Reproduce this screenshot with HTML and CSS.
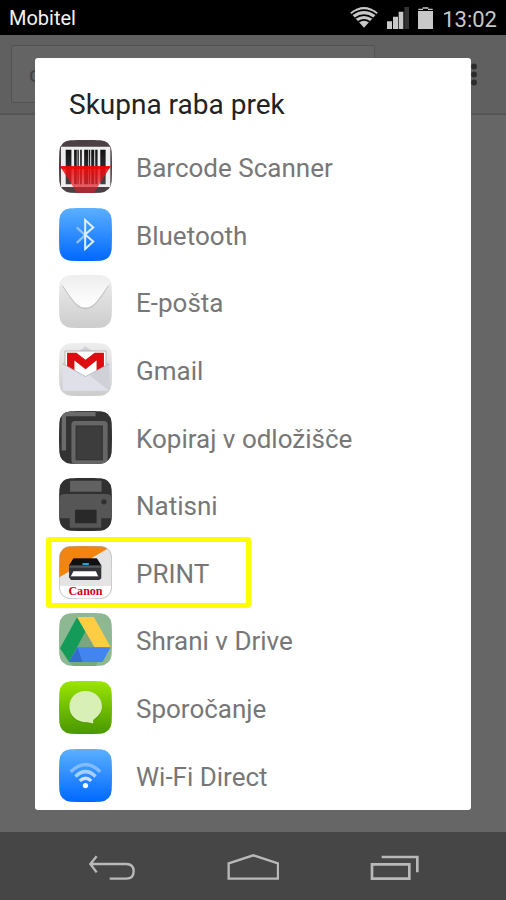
FILE: index.html
```
<!DOCTYPE html>
<html lang="sl">
<head>
  <meta charset="UTF-8" />
  <title>Skupna raba prek</title>
  <meta name="viewport" content="width=device-width, initial-scale=1.0" />
  <link rel="stylesheet" href="styles.css">
</head>
<body>

  <header class="status-bar">
    <span class="carrier">Mobitel</span>
    <svg class="status-wifi" viewBox="0 0 84 64" aria-hidden="true">
      <path d="M42 63L0 17Q42 -17 84 17Z" fill="#c8c8c8"/>
      <path d="M5 23Q42 -4 79 23M15 34Q42 15 69 34M25 45Q42 33 59 45" fill="none" stroke="#000" stroke-width="5"/>
    </svg>
    <svg class="status-signal" viewBox="0 0 66 66" aria-hidden="true">
      <path d="M0 43h15v23H0zM18 29h15v37H18zM35 14h14v52H35z" fill="#c8c8c8"/>
      <path d="M52 0h14v66H52z" fill="#333"/>
    </svg>
    <svg class="status-battery" viewBox="0 0 45 66" aria-hidden="true">
      <path d="M0 12h45v54H0z" fill="#c8c8c8"/>
      <path d="M1 9V5h13V1h17v4h13v4H30V5H15v4z" fill="#c8c8c8"/>
    </svg>
    <time class="clock">13:02</time>
  </header>

  <main class="screen">
    <div class="page">
      <div class="toolbar">
        <input class="url" type="text" value="c" aria-label="URL">
        <button class="menu" type="button" aria-label="Meni"><svg viewBox="0 0 8 24"><g fill="#2c2c2c"><circle cx="4" cy="4" r="3"/><circle cx="4" cy="12" r="3"/><circle cx="4" cy="20" r="3"/></g></svg></button>
      </div>
    </div>

    <section class="dialog" role="dialog" aria-labelledby="title">
      <h1 class="title" id="title">Skupna raba prek</h1>

      <button class="app" type="button">
        <svg class="icon" viewBox="0 0 158 158" aria-hidden="true">
          <defs>
            <clipPath id="tile"><path d="M34 1Q79 -2 124 1Q154 3 157 34Q159 79 157 124Q154 154 124 157Q79 159 34 157Q4 154 1 124Q-1 79 1 34Q4 3 34 1Z"/></clipPath>
            <linearGradient id="blue" x2="0" y2="1"><stop offset="0" stop-color="#5bb0ff"/><stop offset="1" stop-color="#0068ff"/></linearGradient>
            <linearGradient id="green" x2="0" y2="1"><stop offset="0" stop-color="#9be600"/><stop offset="1" stop-color="#489700"/></linearGradient>
            <linearGradient id="gray" x2="0" y2="1"><stop offset="0" stop-color="#eee"/><stop offset="1" stop-color="#ccc"/></linearGradient>
            <linearGradient id="flap" x2="0" y2="1"><stop offset="0" stop-color="#eee"/><stop offset="1" stop-color="#fff"/></linearGradient>
            <linearGradient id="laser" x2="0" y2="1"><stop offset="0" stop-color="#f80808" stop-opacity=".9"/><stop offset="1" stop-color="#d8202c" stop-opacity=".6"/></linearGradient>
            <linearGradient id="bars" x2="0" y2="1"><stop offset="0" stop-color="#111"/><stop offset="1" stop-color="#444"/></linearGradient>
          </defs>
          <g clip-path="url(#tile)">
            <path d="M0 0h158v158H0z" fill="#4b4044"/>
            <path d="M6 20h147v120H6z" fill="#eee"/>
            <path d="M20 29h17v103H20zM45 29h8v103h-8zM55 29h4v103h-4zM63 29h5v103h-5zM75 29h12v103H75zM89 29h4v103h-4zM96 29h9v103h-9zM108 29h7v103h-7zM123 29h16v103h-16z" fill="url(#bars)"/>
            <path d="M3 78h151l-50 80H54z" fill="url(#laser)"/>
            <path d="M3 78h151l-5 8H8z" fill="#f00505"/>
          </g>
        </svg>
        <span>Barcode Scanner</span>
      </button>

      <button class="app" type="button">
        <svg class="icon" viewBox="0 0 158 158" aria-hidden="true">
          <g clip-path="url(#tile)">
            <path d="M0 0h158v158H0z" fill="url(#blue)"/>
            <path d="M53 58L78 81L53 104" fill="none" stroke="#8cc0ff" stroke-width="7"/>
            <path d="M78 79V36L102 58L78 79L102 100L78 122Z" fill="none" stroke="#e0efff" stroke-width="6"/>
          </g>
        </svg>
        <span>Bluetooth</span>
      </button>

      <button class="app" type="button">
        <svg class="icon" viewBox="0 0 158 158" aria-hidden="true">
          <g clip-path="url(#tile)">
            <path d="M0 0h158v158H0z" fill="url(#gray)"/>
            <path d="M9 32C36 70 50 101 79 101S122 70 149 32Z" fill="#bdbdbd"/>
            <path d="M5 22C34 62 50 97 79 97S124 62 153 22L134 0H24Z" fill="url(#flap)"/>
          </g>
        </svg>
        <span>E-pošta</span>
      </button>

      <button class="app" type="button">
        <svg class="icon" viewBox="0 0 158 158" aria-hidden="true">
          <g clip-path="url(#tile)">
            <path d="M0 0h158v158H0z" fill="url(#gray)"/>
            <path d="M10 62L79 10L150 62Z" fill="#d0d1d9"/>
            <path d="M18 24h122v80H18z" fill="#fff" stroke="#999" stroke-width="2"/>
            <path d="M24 90V29H52L79 50L106 29H134V90H112V52L79 78L46 52V90Z" fill="#dc0d10"/>
            <path d="M11 62L79 100L150 62V142H11Z" fill="#e0e1e8"/>
            <path d="M91 96L150 62V142Z" fill="#cfd0d8"/>
            <path d="M11 62L79 100L150 62" fill="none" stroke="#a4a5ad" stroke-width="2"/>
          </g>
        </svg>
        <span>Gmail</span>
      </button>

      <button class="app" type="button">
        <svg class="icon" viewBox="0 0 158 158" aria-hidden="true">
          <g clip-path="url(#tile)">
            <path d="M0 0h158v158H0z" fill="#333"/>
            <path d="M8 118V12Q8 2 18 2H109V16H21V118Z" fill="#6b6b6b"/>
            <rect x="37" y="30" width="108" height="128" rx="11" fill="#666"/>
            <path d="M51 45h78v100H51z" fill="#3d3d3d" stroke="#303030" stroke-width="3"/>
          </g>
        </svg>
        <span>Kopiraj v odložišče</span>
      </button>

      <button class="app" type="button">
        <svg class="icon" viewBox="0 0 158 158" aria-hidden="true">
          <g clip-path="url(#tile)">
            <path d="M0 0h158v158H0z" fill="#303030"/>
            <path d="M33 8h94v33H33z" fill="#616161"/>
            <path d="M0 120V61Q2 48 18 48H140Q156 48 158 61V120H126V148H32V120Z" fill="#565656"/>
            <path d="M48 95h64v40H48z" fill="#292929"/>
            <circle cx="134" cy="71" r="8" fill="#303030"/>
          </g>
        </svg>
        <span>Natisni</span>
      </button>

      <button class="app highlighted" type="button">
        <svg class="icon" viewBox="0 0 158 158" aria-hidden="true">
          <g clip-path="url(#tile)">
            <path d="M0 0h158v158H0z" fill="#e4e4e4"/>
            <path d="M0 0H158L0 94Z" fill="#f28412"/>
            <path d="M0 119h158v39H0z" fill="#fff"/>
            <path d="M43 37H113L126 58V96L120 101H36L30 94V58Z" fill="#303236"/>
            <path d="M43 37H113L126 58H30Z" fill="#111"/>
            <path d="M30 58H126V65H30Z" fill="#55585d"/>
            <path d="M70 51h20l-2 6H70z" fill="#16a5dc"/>
            <path d="M43 75H110L117 91H35Z" fill="#fff"/>
            <path d="M35 91H117" stroke="#777" stroke-width="3"/>
            <text x="79" y="147" class="brand">Canon</text>
          </g>
          <path d="M34 1Q79 -2 124 1Q154 3 157 34Q159 79 157 124Q154 154 124 157Q79 159 34 157Q4 154 1 124Q-1 79 1 34Q4 3 34 1Z" fill="none" stroke="#aaa" stroke-width="2"/>
        </svg>
        <span>PRINT</span>
      </button>

      <button class="app" type="button">
        <svg class="icon" viewBox="0 0 158 158" aria-hidden="true">
          <g clip-path="url(#tile)">
            <path d="M0 0h158v158H0z" fill="#8db891"/>
            <path d="M79 55L136 104L110 158H42L30 145Z" fill="#7aa77e"/>
            <path d="M54 12L79 55L30 146L3 105Z" fill="#159b59"/>
            <path d="M54 12H104L154 102H106Z" fill="#ffcd43"/>
            <path d="M55 102H154L130 146H30Z" fill="#4285f0"/>
            <path d="M55 102L70 146H30Z" fill="#326cd0"/>
          </g>
        </svg>
        <span>Shrani v Drive</span>
      </button>

      <button class="app" type="button">
        <svg class="icon" viewBox="0 0 158 158" aria-hidden="true">
          <g clip-path="url(#tile)">
            <path d="M0 0h158v158H0z" fill="url(#green)"/>
            <path d="M79 34C107 34 128 52 128 79C128 94 120 108 104 118L102 131C96 129 91 126 85 126C54 127 31 108 31 81C31 54 51 34 79 34Z" fill="#347b00" opacity=".35"/>
            <path d="M79 30C107 30 128 50 128 76C128 92 118 105 102 116L102 127C95 126 91 123 84 123C54 124 31 104 31 77C31 50 51 30 79 30Z" fill="#d8f0b6"/>
          </g>
        </svg>
        <span>Sporočanje</span>
      </button>

      <button class="app" type="button">
        <svg class="icon" viewBox="0 0 158 158" aria-hidden="true">
          <g clip-path="url(#tile)">
            <path d="M0 0h158v158H0z" fill="url(#blue)"/>
            <g fill="none" stroke-width="10">
              <path d="M35 68Q79 24 123 68" stroke="#80bcff"/>
              <path d="M49 82Q79 53 109 82" stroke="#a5cfff"/>
              <path d="M62 95Q79 79 96 95" stroke="#cde4ff"/>
            </g>
            <circle cx="79" cy="109" r="8" fill="#f2f8ff"/>
          </g>
        </svg>
        <span>Wi-Fi Direct</span>
      </button>
    </section>
  </main>

  <nav class="nav-bar">
    <button type="button" aria-label="Nazaj">
      <svg viewBox="0 0 156 84"><path d="M32 7L13 30L32 55M14 30H121Q143 30 143 52Q143 74 121 74H71" fill="none" stroke="#b9b9b9" stroke-width="7"/></svg>
    </button>
    <button type="button" aria-label="Domov">
      <svg viewBox="0 0 156 84"><path d="M5 74V28L79 4L153 28V74Z" fill="none" stroke="#b9b9b9" stroke-width="7"/></svg>
    </button>
    <button type="button" aria-label="Nedavno">
      <svg viewBox="0 0 156 84"><path d="M12 31H124V74H12ZM41 9H148V55" fill="none" stroke="#b9b9b9" stroke-width="8"/></svg>
    </button>
  </nav>

</body>
</html>
```

FILE: styles.css
```
* {
  margin: 0;
  padding: 0;
  box-sizing: border-box;
}

body {
  background: #666;
  font-family: Roboto, sans-serif;
  min-height: 100vh;
  display: flex;
  flex-direction: column;
}

button {
  border: none;
  background: none;
  font: inherit;
  color: inherit;
  cursor: pointer;
}

svg {
  display: block;
}

.status-bar {
  display: flex;
  align-items: center;
  gap: 9px;
  height: 35px;
  padding: 0 9px;
  background: #000;
}

.carrier {
  flex: 1;
  padding-top: 1px;
  color: #f2f2f2;
  font-size: 20px;
}

.status-wifi {
  width: 28px;
  height: 21px;
}

.status-signal {
  width: 22px;
  height: 22px;
}

.status-battery {
  width: 15px;
  height: 22px;
}

.clock {
  padding-top: 3px;
  color: #c8c8c8;
  font-size: 22px;
}

/* page and dialog share one grid cell, the dialog lies on top */
.screen {
  flex: 1;
  display: grid;
}

.page,
.dialog {
  grid-area: 1 / 1;
}

.toolbar {
  display: flex;
  align-items: center;
  justify-content: space-between;
  height: 80px;
  padding: 0 28px 0 11px;
  background: #606060;
  border-bottom: 2px solid #555;
}

.url {
  width: 78%;
  height: 58px;
  padding: 0 17px;
  border: 1px solid #525252;
  border-radius: 2px;
  background: #646464;
  color: #444;
  font: 22px Roboto, sans-serif;
}

.menu svg {
  width: 8px;
  height: 25px;
}

.dialog {
  display: flex;
  flex-direction: column;
  margin: 23px 35px 22px;
  padding-bottom: 1px;
  background: #fff;
  border-radius: 3px;
  z-index: 1;
}

.title {
  height: 75px;
  padding: 0 34px;
  color: #222;
  font-size: 28px;
  font-weight: 400;
  line-height: 94px;
}

.app {
  position: relative;
  flex: 1;
  display: flex;
  align-items: center;
  gap: 24px;
  padding: 0 24px;
  color: #777;
  font-size: 26px;
  line-height: 32px;
  text-align: left;
}

.app span {
  padding-top: 3px;
}

.icon {
  width: 53px;
  height: 53px;
}

.brand {
  fill: #d0021b;
  font: bold 36px "Liberation Serif", serif;
  text-anchor: middle;
}

.highlighted::after {
  content: '';
  position: absolute;
  top: -2px;
  bottom: -2px;
  left: 11px;
  width: 205px;
  box-sizing: border-box;
  border: 5px solid #ff0;
  border-radius: 3px;
}

.nav-bar {
  display: flex;
  align-items: center;
  justify-content: center;
  gap: 89px;
  height: 68px;
  padding-top: 3px;
  background: #464646;
}

.nav-bar svg {
  width: 52px;
  height: 28px;
}
```
